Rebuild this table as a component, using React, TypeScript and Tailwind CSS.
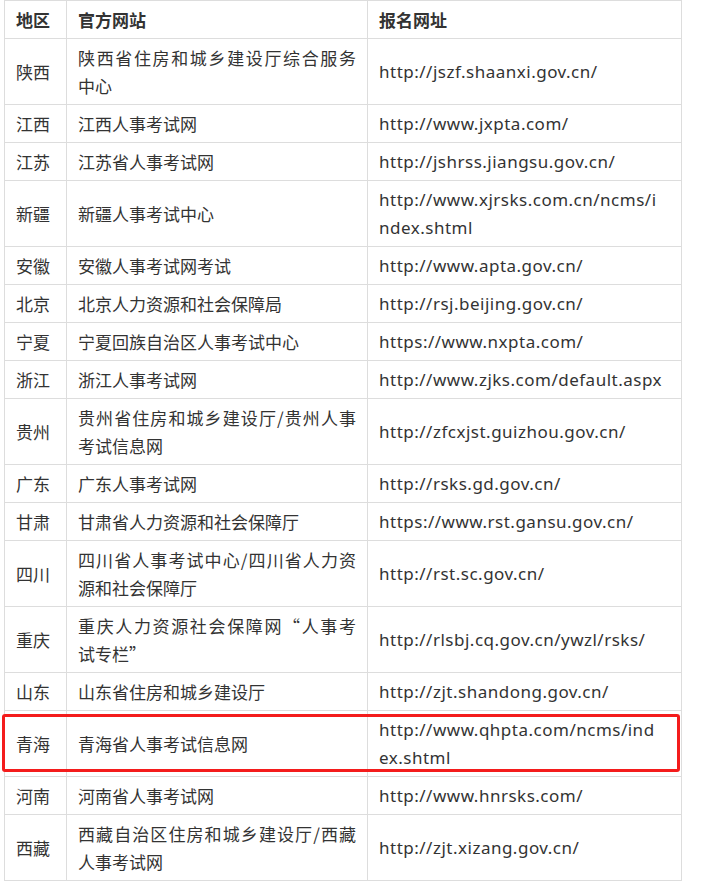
import React from "react";

type Row = {
  region: string;
  site: string[];
  url: string[];
};

const rows: Row[] = [
  { region: "陕西", site: ["陕西省住房和城乡建设厅综合服务", "中心"], url: ["http://jszf.shaanxi.gov.cn/"] },
  { region: "江西", site: ["江西人事考试网"], url: ["http://www.jxpta.com/"] },
  { region: "江苏", site: ["江苏省人事考试网"], url: ["http://jshrss.jiangsu.gov.cn/"] },
  { region: "新疆", site: ["新疆人事考试中心"], url: ["http://www.xjrsks.com.cn/ncms/i", "ndex.shtml"] },
  { region: "安徽", site: ["安徽人事考试网考试"], url: ["http://www.apta.gov.cn/"] },
  { region: "北京", site: ["北京人力资源和社会保障局"], url: ["http://rsj.beijing.gov.cn/"] },
  { region: "宁夏", site: ["宁夏回族自治区人事考试中心"], url: ["https://www.nxpta.com/"] },
  { region: "浙江", site: ["浙江人事考试网"], url: ["http://www.zjks.com/default.aspx"] },
  { region: "贵州", site: ["贵州省住房和城乡建设厅/贵州人事", "考试信息网"], url: ["http://zfcxjst.guizhou.gov.cn/"] },
  { region: "广东", site: ["广东人事考试网"], url: ["http://rsks.gd.gov.cn/"] },
  { region: "甘肃", site: ["甘肃省人力资源和社会保障厅"], url: ["https://www.rst.gansu.gov.cn/"] },
  { region: "四川", site: ["四川省人事考试中心/四川省人力资", "源和社会保障厅"], url: ["http://rst.sc.gov.cn/"] },
  { region: "重庆", site: ["重庆人力资源社会保障网“人事考", "试专栏”"], url: ["http://rlsbj.cq.gov.cn/ywzl/rsks/"] },
  { region: "山东", site: ["山东省住房和城乡建设厅"], url: ["http://zjt.shandong.gov.cn/"] },
  { region: "青海", site: ["青海省人事考试信息网"], url: ["http://www.qhpta.com/ncms/ind", "ex.shtml"] },
  { region: "河南", site: ["河南省人事考试网"], url: ["http://www.hnrsks.com/"] },
  { region: "西藏", site: ["西藏自治区住房和城乡建设厅/西藏", "人事考试网"], url: ["http://zjt.xizang.gov.cn/"] }
];

function Lines({ lines, justify }: { lines: string[]; justify?: boolean }) {
  return (
    <>
      {lines.map((line, i) => (
        <span
          key={i}
          className={
            justify && i < lines.length - 1
              ? "block whitespace-nowrap text-justify [text-align-last:justify]"
              : "block whitespace-nowrap"
          }
        >
          {line}
        </span>
      ))}
    </>
  );
}

const cell = "border border-[#dddddd] pt-[5px] pb-[4px] px-[11px] align-middle text-left";
const cjk = "font-['Noto_Sans_CJK_SC',sans-serif]";
const latin = "font-['Noto_Sans','Noto_Sans_CJK_SC',sans-serif] tracking-[0.5px]";

export default function App() {
  return (
    <div className={`relative min-h-[881px] bg-white text-[17px] leading-[28px] text-[#333333] ${cjk}`}>
      <table className="ml-[4px] w-[677px] table-fixed border-collapse">
        <colgroup>
          <col className="w-[62px]" />
          <col className="w-[301px]" />
          <col className="w-[314px]" />
        </colgroup>
        <thead>
          <tr>
            <th className={`${cell} font-bold`}>地区</th>
            <th className={`${cell} font-bold`}>官方网站</th>
            <th className={`${cell} font-bold`}>报名网址</th>
          </tr>
        </thead>
        <tbody>
          {rows.map((row) => (
            <tr key={row.region}>
              <td className={cell}>{row.region}</td>
              <td className={cell}>
                <Lines lines={row.site} justify />
              </td>
              <td className={`${cell} ${latin}`}>
                <Lines lines={row.url} />
              </td>
            </tr>
          ))}
        </tbody>
      </table>
      {/* annotation box around the 青海 row */}
      <div className="pointer-events-none absolute left-[2px] top-[714px] h-[58px] w-[678px] rounded-[3px] border-[3px] border-[#f41c1c]" />
    </div>
  );
}
